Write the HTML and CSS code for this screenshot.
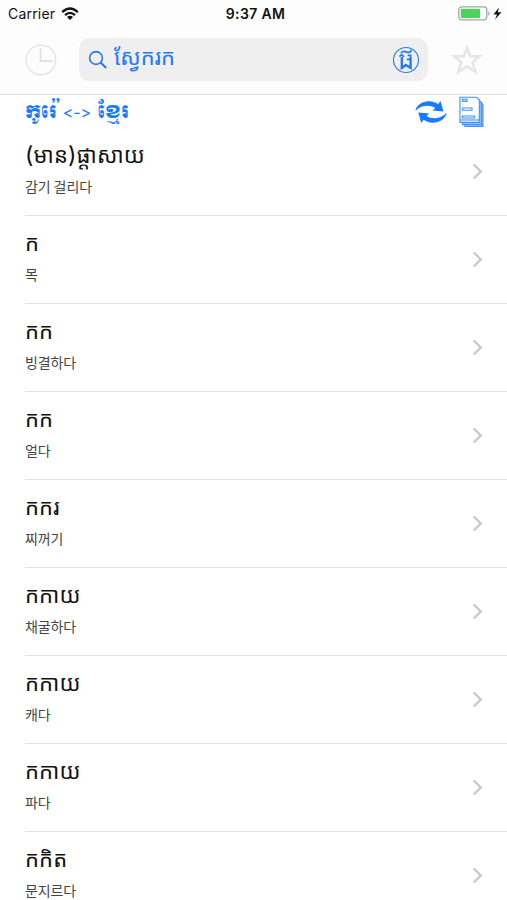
FILE: index.html
```
<!DOCTYPE html>
<html lang="km">
<head>
<meta charset="utf-8">
<title>Dictionary</title>
<link rel="stylesheet" href="styles.css">
</head>
<body>
<header class="top">
  <div class="status">
    <div class="carrier"><span>Carrier</span>
      <svg width="18" height="14" viewBox="0 0 18 14" fill="none" stroke="#111" stroke-width="2.3"><path d="M1.2 5.1Q9-2 16.8 5.1M4 8.1Q9 3.7 14 8.1"/><path d="M6 10.1Q9 7.6 12 10.1L9 13Z" fill="#111" stroke="none"/></svg>
    </div>
    <div class="time">9:37 AM</div>
    <div class="battery">
      <svg width="45" height="16" viewBox="0 0 45 16"><rect x=".8" y=".8" width="28" height="13" rx="3" fill="#fff" stroke="#a5a5a5" stroke-width="1.3"/><rect x="2.7" y="2.7" width="19.5" height="9.2" rx="1" fill="#4cd35c"/><path d="M30.3 5Q33 7.5 30.3 10Z" fill="#a5a5a5"/><path d="M41 1.5L35.5 8.5H39L37 13.5L43.5 6.3H39.8Z" fill="#111"/></svg>
    </div>
  </div>
  <div class="searchbar">
    <svg class="clock" width="32" height="32" viewBox="0 0 32 32" fill="none" stroke="#e1e1e1"><circle cx="16" cy="16" r="14.8" stroke-width="1.2"/><path d="M15.5 4V17H27.5" stroke-width="1.8"/></svg>
    <div class="field">
      <svg class="lens" width="20" height="20" viewBox="0 0 20 20" fill="none" stroke="#2478f5" stroke-width="1.6"><circle cx="8" cy="8" r="6.4"/><path d="M12.5 12.5L18.2 18" stroke-width="2"/></svg>
      <span class="placeholder">ស្វែករក</span>
      <svg class="keys" width="28" height="28" viewBox="0 0 28 28" fill="none" stroke="#2478f5"><circle cx="14" cy="14" r="12.5" stroke-width="1.1"/><path d="M9.8 11V22L13.8 19L18.6 22V11.5" stroke-width="2.3"/><path d="M7.4 10.6L9.6 8.6L12 10.8M8.8 6.8Q12 4.2 14.5 6.2Q19 7 19.2 3.6M18.6 12V9.4H15.6M14.8 13.4H18" stroke-width="1.7"/></svg>
    </div>
    <svg class="star" width="32" height="32" viewBox="0 0 32 32" fill="none" stroke="#e6e6e6" stroke-width="2.6"><path d="M16 4L19.3 12.4H28.6L21.6 18.3L24.6 28L16 22.4L7.4 28L10.4 18.3L3.4 12.4H12.7Z"/></svg>
  </div>
</header>
<main>
  <div class="langs">
    <h1 class="pair"><b>កូរ៉េ</b><span class="arrow">&lt;-&gt;</span><b>ខ្មែរ</b></h1>
    <svg class="swap" width="32" height="24" viewBox="0 0 32 24" fill="#167bff"><path d="M.5 11C1 5 8 1 14 1.2C18 1.3 21 2.6 23 4.2L25.5 1L28.5 11.5L17.5 10.5L20.3 8C14.5 4 5 5.5 .5 11Z"/><path d="M31.5 12.5C31 19 24 22.8 17.8 22.7C14 22.6 10.8 21.4 8.7 19.8L6.2 23L3.3 12.5L14.2 13.5L11.6 16C17.5 20 27 18.5 31.5 12.5Z"/></svg>
    <svg class="book" width="25" height="32" viewBox="0 0 25 32" fill="#9cc6ff" stroke="#3f8eff" stroke-width="1.1"><path d="M3.5 6H21.5L24 8.5V30.5H6Z"/><path d="M2.2 4H20L22.4 6.5V28.6H3.5Z"/><path d="M1 1.2H17.5L20.3 4V26.4H1Z" fill="#fff"/><path d="M1 24H20.3" /><path d="M3.5 3.2H8V5.4H3.5ZM3.5 12H13V14.2H3.5ZM3.5 20H15.5V22H3.5Z" fill="#fff"/></svg>
  </div>
  <ul class="list">
    <li><div class="entry"><div class="word"><span class="paren">(</span>មាន<span class="paren">)</span>ផ្តាសាយ</div><div class="meaning">감기 걸리다</div></div><i class="chevron"></i></li>
    <li><div class="entry"><div class="word">ក</div><div class="meaning">목</div></div><i class="chevron"></i></li>
    <li><div class="entry"><div class="word">កក</div><div class="meaning">빙결하다</div></div><i class="chevron"></i></li>
    <li><div class="entry"><div class="word">កក</div><div class="meaning">얼다</div></div><i class="chevron"></i></li>
    <li><div class="entry"><div class="word">កករ</div><div class="meaning">찌꺼기</div></div><i class="chevron"></i></li>
    <li><div class="entry"><div class="word">កកាយ</div><div class="meaning">채굴하다</div></div><i class="chevron"></i></li>
    <li><div class="entry"><div class="word">កកាយ</div><div class="meaning">캐다</div></div><i class="chevron"></i></li>
    <li><div class="entry"><div class="word">កកាយ</div><div class="meaning">파다</div></div><i class="chevron"></i></li>
    <li><div class="entry"><div class="word">កកិត</div><div class="meaning">문지르다</div></div><i class="chevron"></i></li>
  </ul>
</main>
</body>
</html>
```
FILE: styles.css
```
* { box-sizing: border-box; }
body { margin: 0; height: 900px; overflow: hidden; background: #fff; color: #111; font-family: Inter, "Noto Sans Khmer", "Khmer OS", "Noto Sans CJK KR", sans-serif; }
svg { display: block; flex: none; }
.top { height: 95px; background: #fdfdfd; border-bottom: 1px solid #dedede; }
.status { height: 27px; display: grid; grid-template-columns: 1fr auto 1fr; align-items: center; padding: 0 4px 0 8px; }
.carrier { display: flex; align-items: center; gap: 6px; font-size: 14px; letter-spacing: .2px; }
.time { font-size: 14px; font-weight: 600; letter-spacing: .35px; }
.battery { justify-self: end; }
.searchbar { height: 65px; display: flex; align-items: center; padding: 0 24px 0 25px; }
.field { width: 349px; height: 43px; margin: 0 23px 0 22px; padding: 0 8px 0 9px; display: flex; align-items: center; border-radius: 11px; background: #efeff0; }
.placeholder { flex: 1; height: 38px; margin-left: 6px; color: #2478f5; font-size: 22px; line-height: 32px; white-space: nowrap; }
.langs { height: 33px; display: flex; align-items: center; padding: 1px 23px 0 25px; }
.pair { flex: 1; height: 31px; margin: 0; display: flex; align-items: center; gap: 6px; color: #167bff; font-family: "Khmer OS Muol", Moul, "Noto Serif Khmer", "Noto Sans Khmer", serif; font-size: 18px; line-height: 29px; white-space: nowrap; }
.pair b { font-weight: 400; }
.arrow { font: 400 16px/33px Inter, sans-serif; font-feature-settings: "calt" 0; }
.swap { margin-right: 12px; }
.list { margin: 0; padding: 0 0 0 25px; list-style: none; }
.list li { height: 88px; padding-right: 24px; display: flex; align-items: center; justify-content: space-between; border-bottom: 1px solid #e1e1e1; }
.entry { height: 65px; display: grid; grid-template-rows: 32px 28px; }
.word { font-size: 22px; line-height: 33px; letter-spacing: .1px; white-space: nowrap; }
.paren { display: inline-block; font-size: 23px; line-height: 20px; }
.meaning { padding-top: 1px; font-family: "Noto Sans CJK KR", sans-serif; font-size: 14px; line-height: 28px; letter-spacing: -.1px; color: #444; white-space: nowrap; }
.chevron { width: 11px; height: 11px; margin-right: 3px; border: solid #c5c5c7; border-width: 2px 2px 0 0; transform: rotate(45deg); }
```
